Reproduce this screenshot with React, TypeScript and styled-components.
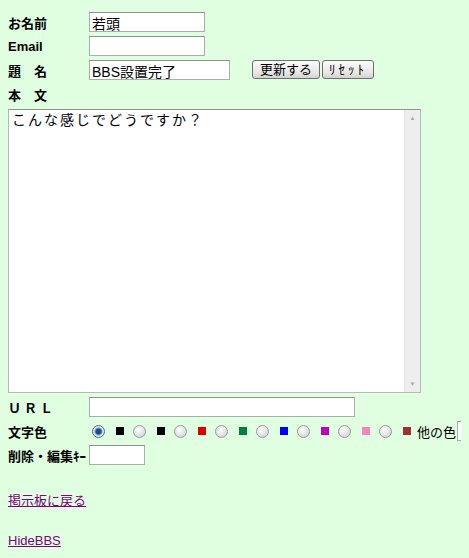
import styled, { createGlobalStyle } from "styled-components";

const GlobalStyle = createGlobalStyle`
  html {
    overflow: hidden;
  }
  body {
    margin: 8px;
    background-color: #e0ffe0;
    font-family: "Liberation Sans", "Noto Sans CJK JP", sans-serif;
    font-size: 13px;
    color: #000;
  }
`;

const Form = styled.form`
  display: grid;
  grid-template-columns: 81px 1fr;
  row-gap: 4px;
  padding-top: 4px;
  width: 520px;
`;

const Label = styled.div<{ $spaced?: boolean }>`
  font-weight: bold;
  font-size: 13px;
  display: flex;
  align-items: center;
  white-space: nowrap;
  letter-spacing: ${(p) => (p.$spaced ? "3px" : "0")};
`;

const Field = styled.div`
  display: flex;
  align-items: center;
  white-space: nowrap;
`;

const Input = styled.input<{ $w: number }>`
  box-sizing: border-box;
  flex: none;
  width: ${(p) => p.$w}px;
  height: 20px;
  margin: 0;
  padding: 1px 2px 0;
  border: 1px solid #a8b0a8;
  border-top-color: #8c948c;
  background: #fff;
  font-family: "Liberation Sans", "Noto Sans CJK JP", sans-serif;
  font-size: 14px;
  color: #000;
  outline: none;
`;

const Button = styled.button<{ $ml?: number; $w: number; $ls?: number }>`
  box-sizing: border-box;
  width: ${(p) => p.$w}px;
  height: 19px;
  margin: 0 0 0 ${(p) => p.$ml ?? 2}px;
  padding: 0;
  border: 1px solid #6f6f6f;
  border-radius: 3px;
  background: linear-gradient(#fbfbfb, #e6e6e6 70%, #d2d2d2);
  font-family: "Liberation Sans", "Noto Sans CJK JP", sans-serif;
  font-size: 13px;
  line-height: 16px;
  letter-spacing: ${(p) => p.$ls ?? 0}px;
  color: #000;
  align-self: flex-start;
`;

const BodyLabel = styled(Label)`
  grid-column: 1 / 3;
  height: 20px;
`;

const TextBox = styled.div`
  grid-column: 1 / 3;
  box-sizing: border-box;
  width: 413px;
  height: 284px;
  margin-top: 1px;
  display: flex;
  border: 1px solid #b4bcb4;
  border-top-color: #8c948c;
  background: #fff;
`;

const TextArea = styled.textarea`
  flex: 1;
  margin: 0;
  padding: 1px 3px;
  border: none;
  background: transparent;
  font-family: "Liberation Sans", "Noto Sans CJK JP", sans-serif;
  font-size: 14px;
  line-height: 18px;
  letter-spacing: 2px;
  resize: none;
  overflow: hidden;
  outline: none;
`;

const ScrollTrack = styled.div`
  width: 15px;
  display: flex;
  flex-direction: column;
  justify-content: space-between;
  align-items: center;
  background: #eeeeee;
  border-left: 1px solid #e2e2e2;
  color: #a8a8a8;
  font-size: 6px;
  line-height: 1;
  padding: 5px 0 5px;
`;

const ColorRow = styled.div`
  display: flex;
  align-items: center;
  white-space: nowrap;
  height: 20px;
`;

const Radio = styled.input`
  appearance: none;
  flex: none;
  box-sizing: border-box;
  width: 13px;
  height: 13px;
  margin: 0 11px 0 3px;
  border: 1px solid #9a9a9a;
  border-radius: 50%;
  background: radial-gradient(circle at 40% 35%, #ffffff, #e2e2e6 55%, #c4c4cc);
  &:checked {
    border-color: #4a6a8a;
    background: radial-gradient(circle, #1c4f86 0 2.5px, #6ea0d0 3.5px, #e8eef4 4.5px, #c8d0dc);
  }
`;

const Swatch = styled.span<{ $c: string }>`
  display: inline-block;
  flex: none;
  width: 8px;
  height: 8px;
  margin-right: 6px;
  background: ${(p) => p.$c};
`;

const OtherLabel = styled.span`
  flex: none;
  font-size: 13px;
  margin-right: 1px;
`;

const NavLink = styled.a`
  display: inline-block;
  color: #800080;
  font-size: 13px;
  text-decoration: underline;
`;

const Links = styled.div`
  display: flex;
  flex-direction: column;
  align-items: flex-start;
  gap: 24px;
  padding-top: 25px;
`;

const colors = ["#000000", "#000000", "#e00000", "#008040", "#0000ff", "#c000c0", "#ff80c0", "#a03030"];

function App() {
  return (
    <>
      <GlobalStyle />
      <Form onSubmit={(e) => e.preventDefault()}>
        <Label>お名前</Label>
        <Field>
          <Input $w={116} defaultValue="若頭" />
        </Field>
        <Label>Email</Label>
        <Field>
          <Input $w={116} />
        </Field>
        <Label>題　名</Label>
        <Field>
          <Input $w={141} defaultValue="BBS設置完了" />
          <Button $ml={22} $w={68}>更新する</Button>
          <Button $w={52} $ls={3}>ﾘｾｯﾄ</Button>
        </Field>
        <BodyLabel>本　文</BodyLabel>
        <TextBox>
          <TextArea defaultValue="こんな感じでどうですか？" />
          <ScrollTrack>
            <span>▲</span>
            <span>▼</span>
          </ScrollTrack>
        </TextBox>
        <Label $spaced>ＵＲＬ</Label>
        <Field>
          <Input $w={266} />
        </Field>
        <Label>文字色</Label>
        <ColorRow>
          {colors.map((c, i) => (
            <span key={i} style={{ display: "contents" }}>
              <Radio type="radio" name="color" defaultChecked={i === 0} />
              <Swatch $c={c} />
            </span>
          ))}
          <OtherLabel>他の色</OtherLabel>
          <Input $w={60} />
        </ColorRow>
        <Label>削除・編集ｷｰ</Label>
        <Field>
          <Input $w={56} />
        </Field>
      </Form>
      <Links>
        <NavLink href="#">掲示板に戻る</NavLink>
        <NavLink href="#">HideBBS</NavLink>
      </Links>
    </>
  );
}

export default App;
